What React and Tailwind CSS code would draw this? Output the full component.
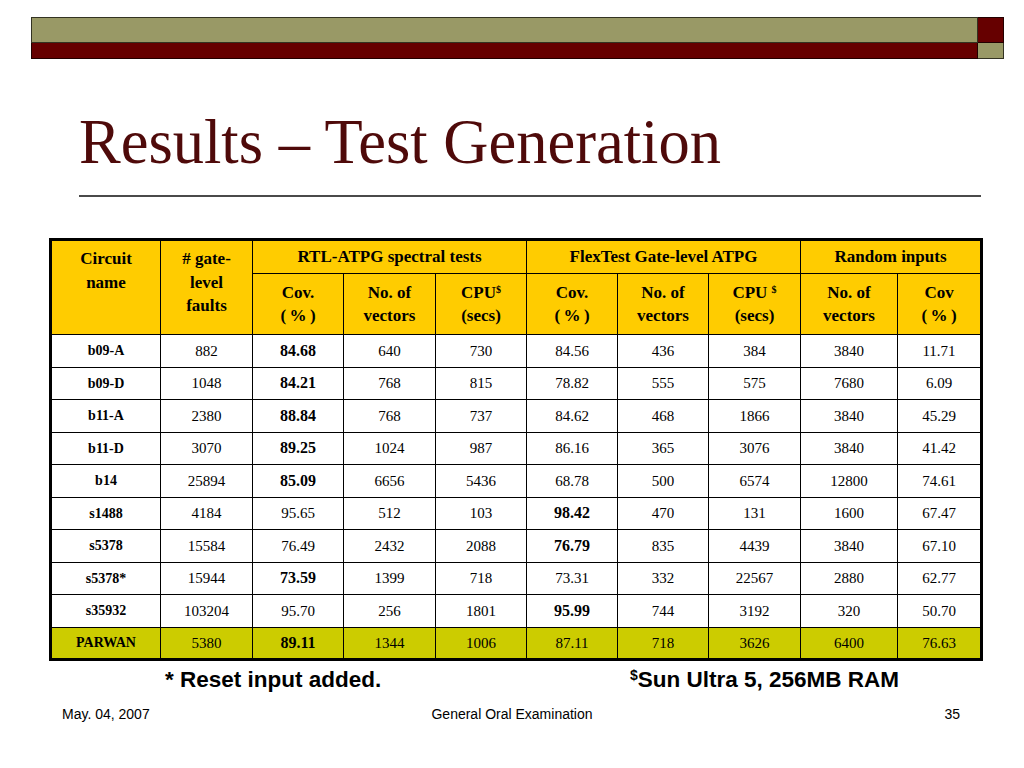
const rows = [
  { name: "b09-A", v: ["882", "84.68", "640", "730", "84.56", "436", "384", "3840", "11.71"], bold: [1] },
  { name: "b09-D", v: ["1048", "84.21", "768", "815", "78.82", "555", "575", "7680", "6.09"], bold: [1] },
  { name: "b11-A", v: ["2380", "88.84", "768", "737", "84.62", "468", "1866", "3840", "45.29"], bold: [1] },
  { name: "b11-D", v: ["3070", "89.25", "1024", "987", "86.16", "365", "3076", "3840", "41.42"], bold: [1] },
  { name: "b14", v: ["25894", "85.09", "6656", "5436", "68.78", "500", "6574", "12800", "74.61"], bold: [1] },
  { name: "s1488", v: ["4184", "95.65", "512", "103", "98.42", "470", "131", "1600", "67.47"], bold: [4] },
  { name: "s5378", v: ["15584", "76.49", "2432", "2088", "76.79", "835", "4439", "3840", "67.10"], bold: [4] },
  { name: "s5378*", v: ["15944", "73.59", "1399", "718", "73.31", "332", "22567", "2880", "62.77"], bold: [1] },
  { name: "s35932", v: ["103204", "95.70", "256", "1801", "95.99", "744", "3192", "320", "50.70"], bold: [4] },
];

const parwan = { name: "PARWAN", v: ["5380", "89.11", "1344", "1006", "87.11", "718", "3626", "6400", "76.63"], bold: [1] };

function DataRow({ row, last }) {
  const bg = last ? "bg-[#cccc00]" : "bg-white";
  return (
    <tr className={`h-[32.5px] ${bg}`}>
      <td className="border border-black text-center align-middle font-bold text-[14px]">{row.name}</td>
      {row.v.map((val, i) => (
        <td
          key={i}
          className={`border border-black text-center align-middle ${row.bold.includes(i) ? "font-bold text-[16px]" : "text-[15px]"}`}
        >
          {val}
        </td>
      ))}
    </tr>
  );
}

export default function App() {
  return (
    <div className="w-[1024px] h-[768px] bg-white relative overflow-hidden">
      {/* top banner bars */}
      <div className="flex pt-[17px] pl-[31px]">
        <div className="flex flex-col w-[947px]">
          <div className="h-[26px] bg-[#999966] border border-[#333322]"></div>
          <div className="h-[16px] bg-[#660000] border border-t-0 border-[#220000]"></div>
        </div>
        <div className="flex flex-col w-[26px]">
          <div className="h-[26px] bg-[#660000] border border-l-0 border-[#220000]"></div>
          <div className="h-[16px] bg-[#999966] border border-l-0 border-t-0 border-[#333322]"></div>
        </div>
      </div>

      {/* title */}
      <div className="pl-[79px] pt-[43px] h-[136px]">
        <h1 className="text-[#4f0a0a] text-[62.5px] leading-[80px]" style={{ fontFamily: '"Liberation Serif", serif' }}>
          Results – Test Generation
        </h1>
      </div>
      <div className="ml-[79px] w-[902px] h-[2px] bg-[#4a4a4a]"></div>

      {/* table */}
      <div className="pl-[49px] pt-[41px]" style={{ fontFamily: '"Liberation Serif", serif' }}>
        <table className="border-collapse border-[3px] border-black text-black w-[931px] table-fixed">
          <colgroup>
            <col className="w-[110px]" />
            <col className="w-[92px]" />
            <col className="w-[91px]" />
            <col className="w-[92px]" />
            <col className="w-[91px]" />
            <col className="w-[91px]" />
            <col className="w-[91px]" />
            <col className="w-[92px]" />
            <col className="w-[97px]" />
            <col className="w-[84px]" />
          </colgroup>
          <thead className="bg-[#ffcc00] font-bold text-[17px] leading-[23.5px]">
            <tr className="h-[34px]">
              <th rowSpan={2} className="border border-black align-top pt-[6px]">
                Circuit<br />name
              </th>
              <th rowSpan={2} className="border border-black align-top pt-[6px]">
                # gate-<br />level<br />faults
              </th>
              <th colSpan={3} className="border border-black align-middle">RTL-ATPG spectral tests</th>
              <th colSpan={3} className="border border-black align-middle">FlexTest Gate-level ATPG</th>
              <th colSpan={2} className="border border-black align-middle">Random inputs</th>
            </tr>
            <tr className="h-[61px]">
              <th className="border border-black">Cov.<br />(&thinsp;%&thinsp;)</th>
              <th className="border border-black">No. of<br />vectors</th>
              <th className="border border-black">
                CPU<sup className="text-[10px]">$</sup>
                <br />(secs)
              </th>
              <th className="border border-black">Cov.<br />(&thinsp;%&thinsp;)</th>
              <th className="border border-black">No. of<br />vectors</th>
              <th className="border border-black">
                CPU <sup className="text-[10px]">$</sup>
                <br />(secs)
              </th>
              <th className="border border-black">No. of<br />vectors</th>
              <th className="border border-black">Cov<br />(&thinsp;%&thinsp;)</th>
            </tr>
          </thead>
          <tbody>
            {rows.map((r) => (
              <DataRow key={r.name} row={r} />
            ))}
            <DataRow row={parwan} last />
          </tbody>
        </table>
      </div>

      {/* footnotes */}
      <div className="flex font-bold text-[22.5px] leading-[28px] text-black mt-[5px]" style={{ fontFamily: '"Liberation Sans", Arial, sans-serif' }}>
        <div className="pl-[165px] w-[630px]">* Reset input added.</div>
        <div>
          <sup className="text-[14px]">$</sup>Sun Ultra 5, 256MB RAM
        </div>
      </div>

      {/* footer */}
      <div className="flex items-center text-[14px] text-black mt-[10px] px-[62px]" style={{ fontFamily: '"Liberation Sans", Arial, sans-serif' }}>
        <div className="w-[300px]">May. 04, 2007</div>
        <div className="flex-1 text-center">General Oral Examination</div>
        <div className="w-[300px] text-right pr-[2px]">35</div>
      </div>
    </div>
  );
}
